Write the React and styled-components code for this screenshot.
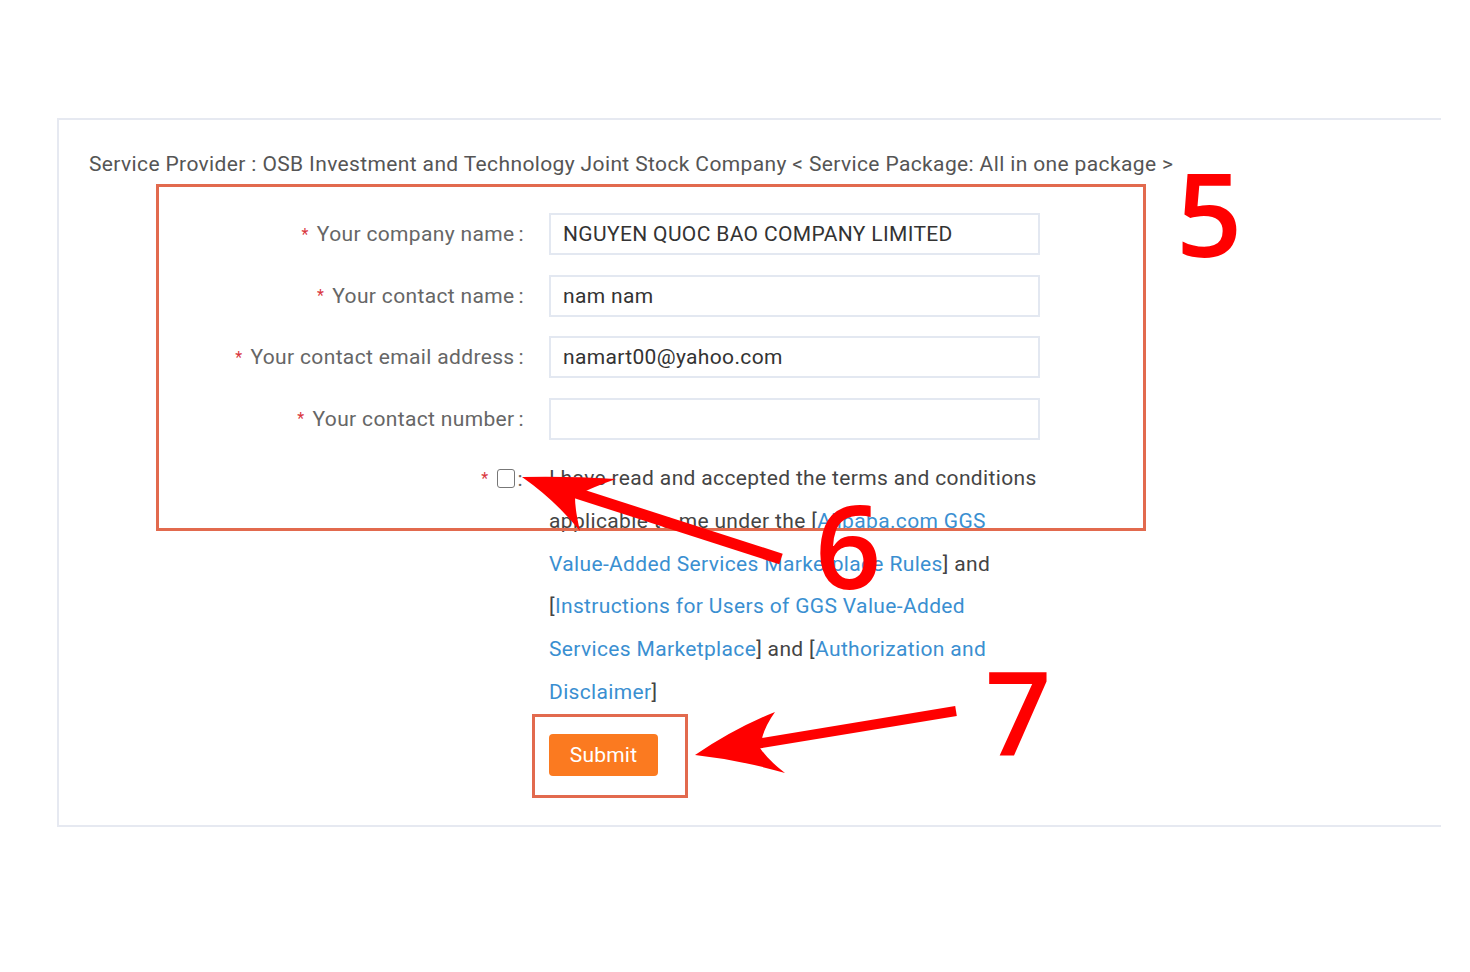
import React from "react";
import styled, { createGlobalStyle } from "styled-components";

const Global = createGlobalStyle`
  html, body { margin: 0; padding: 0; background: #fff; }
  body { font-family: Roboto, "Liberation Sans", Arial, sans-serif; }
  * { box-sizing: border-box; }
`;

const Page = styled.div`
  position: relative;
  width: 1470px;
  height: 972px;
  padding-top: 118px;
  overflow: hidden;
`;

const Panel = styled.section`
  margin-left: 57px;
  width: 1384px;
  border: 2px solid #e6e9f1;
  border-right: none;
  padding: 31px 0 49px 30px;
`;

const Header = styled.div`
  font-size: 21px;
  line-height: 26px;
  letter-spacing: 0.37px;
  color: #555;
`;

const Form = styled.div`
  margin-top: 36px;
  margin-left: -30px;
  display: grid;
  grid-template-columns: 465px 491px;
  column-gap: 25px;
  row-gap: 19.5px;
  align-items: center;
  font-size: 21px;
  letter-spacing: 0.35px;
`;

const Label = styled.label`
  justify-self: end;
  color: #666;
  white-space: nowrap;
  display: flex;
  align-items: center;
`;

const Star = styled.span`
  color: #d9363e;
  font-size: 16px;
  margin-right: 8px;
`;

const Colon = styled.span`
  margin-left: ${(p) => p.$gap ?? 4}px;
`;

const Input = styled.div`
  height: 42px;
  border: 2px solid #e3e8f1;
  padding: 0 12px;
  display: flex;
  align-items: center;
  color: #333;
`;

const CheckLabel = styled.div`
  justify-self: end;
  align-self: start;
  display: flex;
  align-items: center;
  height: 43px;
  margin-top: -2px;
  margin-right: 1px;
  color: #666;
`;

const Box = styled.span`
  display: inline-block;
  width: 18px;
  height: 19px;
  border: 1.5px solid #777;
  border-radius: 3px;
`;

const Terms = styled.div`
  margin-top: -2px;
  line-height: 42.8px;
  color: #444;
`;

const Link = styled.a`
  color: #3a8fd1;
  text-decoration: none;
`;

const NoWrap = styled.span`
  white-space: nowrap;
`;

const SubmitCell = styled.div`
  grid-column: 2;
  margin-top: 0.5px;
`;

const SubmitButton = styled.button`
  width: 109px;
  height: 42px;
  border: none;
  border-radius: 4px;
  background: #fb7a20;
  color: #fff;
  font-family: Roboto, "Liberation Sans", Arial, sans-serif;
  font-size: 21px;
  letter-spacing: 0.2px;
  padding: 0;
`;

const Overlay = styled.svg`
  position: absolute;
  left: 0;
  top: 0;
  pointer-events: none;
`;

const Num = styled.text`
  font-family: "Open Sans", "DejaVu Sans", sans-serif;
  font-weight: 600;
  font-size: 116px;
  fill: #ff0000;
`;

const fields = [
  ["Your company name", "NGUYEN QUOC BAO COMPANY LIMITED"],
  ["Your contact name", "nam nam"],
  ["Your contact email address", "namart00@yahoo.com"],
  ["Your contact number", ""],
];

function Annotations() {
  return (
    <Overlay width="1470" height="972" viewBox="0 0 1470 972">
      <rect x="157.5" y="185.5" width="987" height="344" fill="none" stroke="#e26a4e" strokeWidth="3" />
      <rect x="533.5" y="715.5" width="153" height="81" fill="none" stroke="#e26a4e" strokeWidth="3" />
      <Num x="1176" y="257">5</Num>
      <Num x="815" y="589">6</Num>
      <Num x="985" y="755">7</Num>
      <line x1="781" y1="559" x2="570" y2="491" stroke="#ff0000" strokeWidth="11" />
      <path d="M522 477 Q570 476 616 479 Q585 490 575 497 Q575 510 580 531 Q555 500 522 477 Z" fill="#ff0000" />
      <line x1="956" y1="711" x2="750" y2="745" stroke="#ff0000" strokeWidth="10" />
      <path d="M695 755 Q735 728 775 712 Q762 730 760 748 Q768 760 785 773 Q740 760 695 755 Z" fill="#ff0000" />
    </Overlay>
  );
}

export default function App() {
  return (
    <>
      <Global />
      <Page>
        <Panel>
          <Header>
            Service Provider : OSB Investment and Technology Joint Stock Company &lt; Service Package: All in one package &gt;
          </Header>
          <Form>
            {fields.map(([label, value]) => (
              <React.Fragment key={label}>
                <Label>
                  <Star>*</Star>
                  {label}
                  <Colon>:</Colon>
                </Label>
                <Input>{value}</Input>
              </React.Fragment>
            ))}
            <CheckLabel>
              <Star>*</Star>
              <Box />
              <Colon $gap={3}>:</Colon>
            </CheckLabel>
            <Terms>
              I have read and accepted the terms and conditions applicable to me under the [
              <Link href="#">Alibaba.com GGS <NoWrap>Value-Added</NoWrap> Services Marketplace Rules</Link>] and [
              <Link href="#">Instructions for Users of GGS <NoWrap>Value-Added</NoWrap> Services Marketplace</Link>] and [
              <Link href="#">Authorization and Disclaimer</Link>]
            </Terms>
            <SubmitCell>
              <SubmitButton>Submit</SubmitButton>
            </SubmitCell>
          </Form>
        </Panel>
        <Annotations />
      </Page>
    </>
  );
}
